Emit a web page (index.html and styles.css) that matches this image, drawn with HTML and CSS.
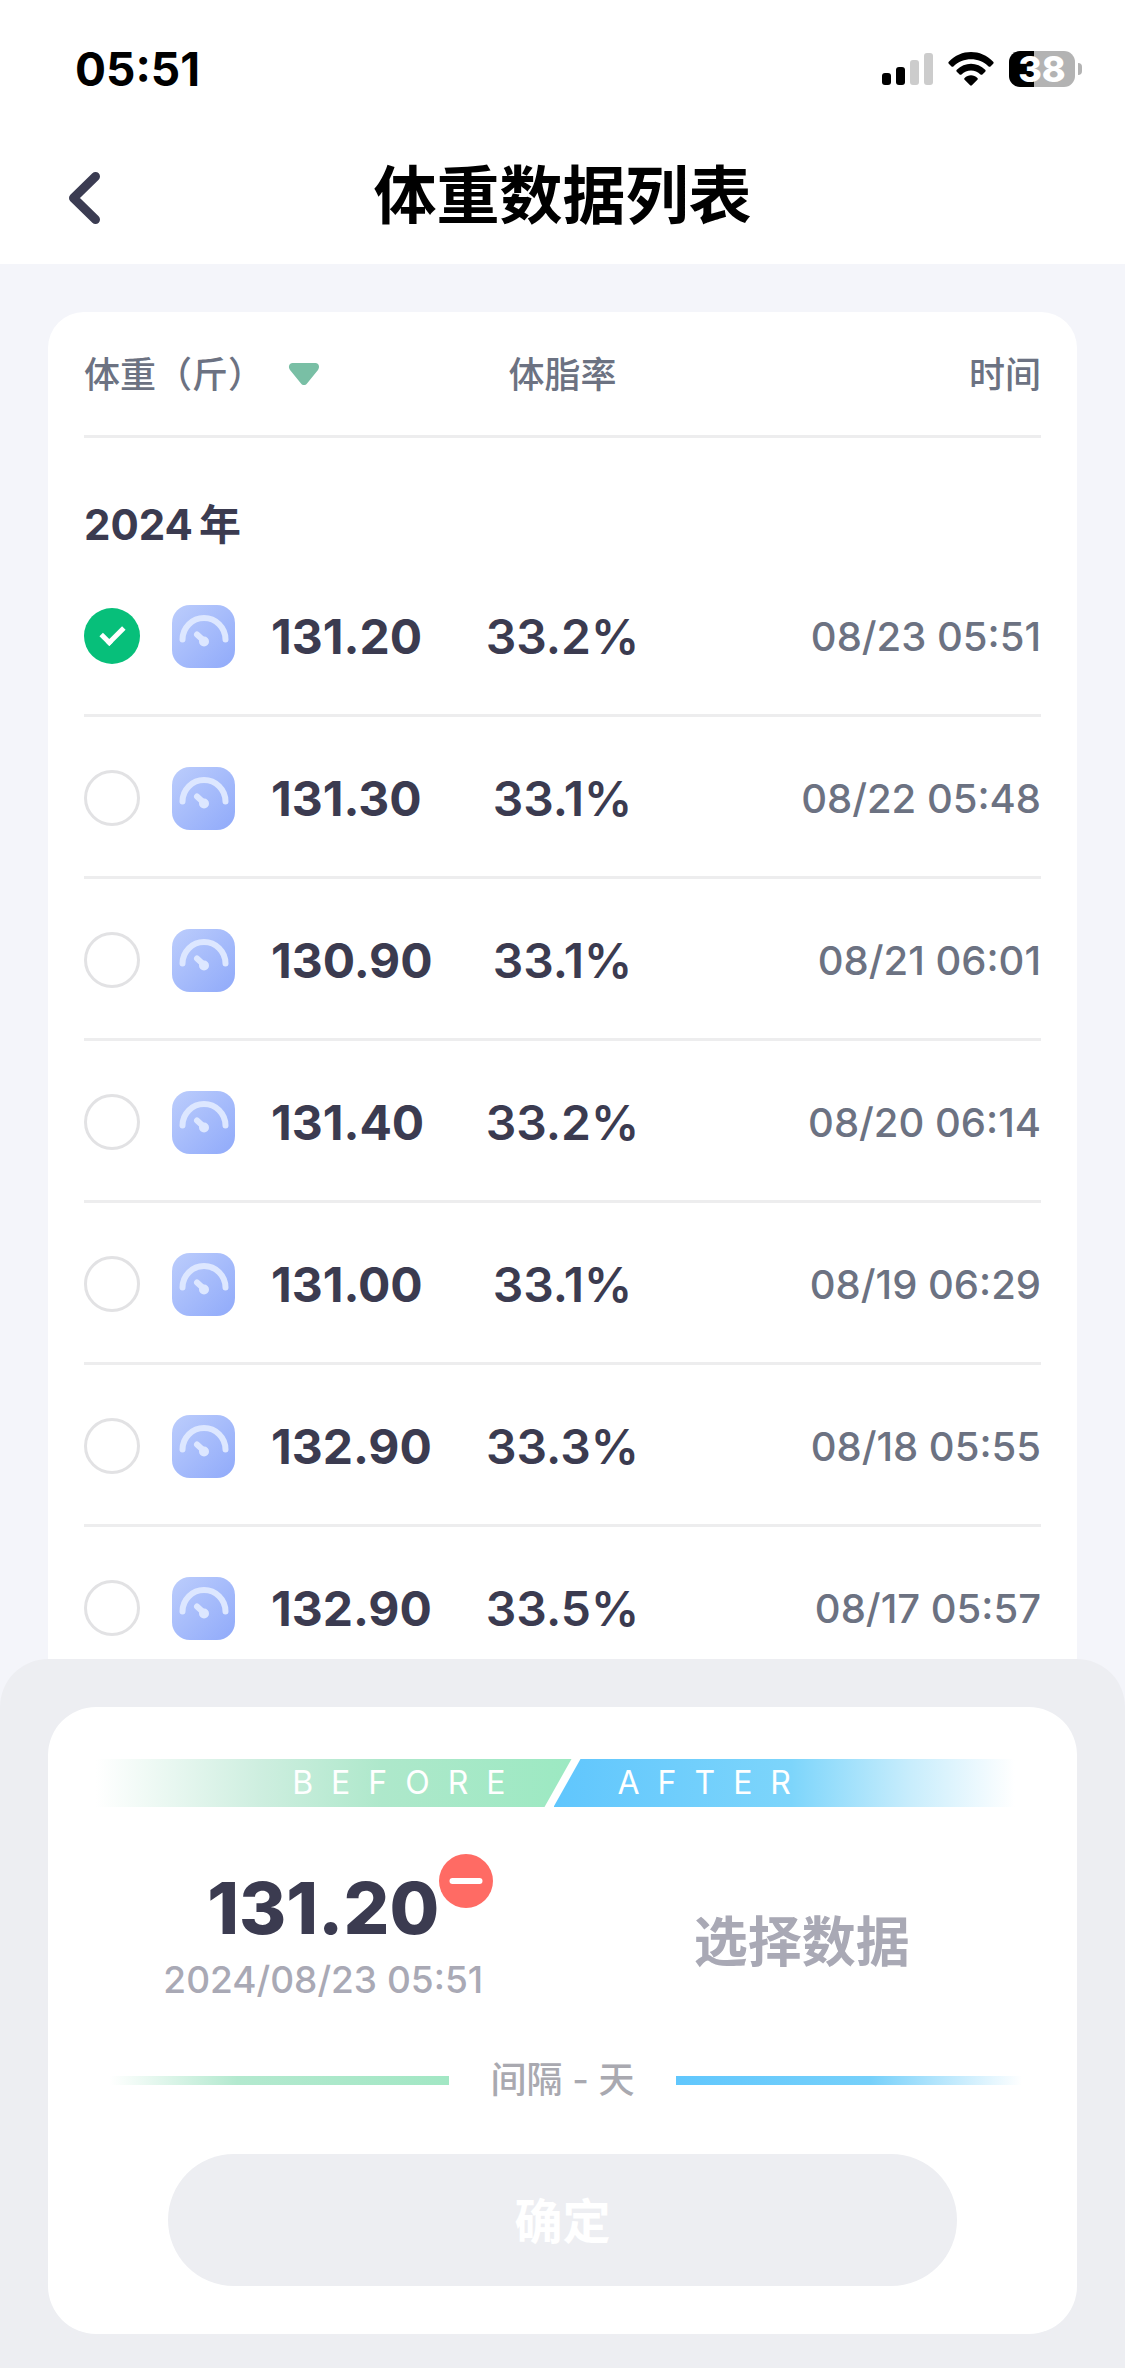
FILE: index.html
```html
<!DOCTYPE html>
<html lang="zh-CN">
<head>
<meta charset="utf-8">
<meta name="viewport" content="width=device-width, initial-scale=1">
<title>体重数据列表</title>
<link rel="stylesheet" href="styles.css">
</head>
<body>
<svg class="defs" width="0" height="0" aria-hidden="true">
  <defs>
    <linearGradient id="gauge-fill" x1="0" y1="0" x2="1" y2="1">
      <stop offset="0" stop-color="#bccdfc"/>
      <stop offset="1" stop-color="#90aafa"/>
    </linearGradient>
    <symbol id="gauge" viewBox="0 0 63 63">
      <rect width="63" height="63" rx="18" fill="url(#gauge-fill)"/>
      <path d="M10.500 34.500A21.500 21.500 0 0 1 53.500 34.500" fill="none" stroke="#dde7ff" stroke-width="6" stroke-linecap="round"/>
      <path d="M25 29.500L31 35" stroke="#dde7ff" stroke-width="6" stroke-linecap="round"/>
      <circle cx="32" cy="36.500" r="5" fill="#dde7ff"/>
    </symbol>
  </defs>
</svg>
<div class="app">
  <header class="top">
    <div class="status">
      <span class="clock">05:51</span>
      <div class="indicators">
        <svg width="51" height="33" viewBox="0 0 51 33" aria-label="信号">
          <rect x="0" y="20" width="9" height="12" rx="3"/>
          <rect x="14" y="14" width="9" height="18" rx="3"/>
          <rect x="28" y="7" width="9" height="25" rx="3" fill="#ccc"/>
          <rect x="42" y="0" width="9" height="32" rx="3" fill="#ccc"/>
        </svg>
        <svg width="46" height="34" viewBox="0 0 46 34" aria-label="无线网络">
          <path d="M0.800 9.800C13-3.200 33-3.200 45.200 9.800c.6.600.6 1.300 0 1.900l-2.700 2.700c-.6.600-1.300.6-1.900 0C31 4.800 15 4.800 5.400 14.400c-.6.600-1.300.6-1.900 0L.8 11.700c-.6-.6-.6-1.300 0-1.900z"/>
          <path d="M8.800 17.800c7.800-8.200 20.600-8.200 28.400 0 .6.600.6 1.300 0 1.900l-2.800 2.700c-.5.600-1.300.6-1.900 0-5.200-5.200-13.800-5.200-19 0-.6.600-1.400.6-1.900 0l-2.800-2.700c-.6-.6-.6-1.300 0-1.900z"/>
          <path d="M16.600 26c3.500-3.600 9.300-3.600 12.800 0 .6.600.6 1.200 0 1.800l-5.500 5.500c-.6.600-1.200.6-1.800 0l-5.500-5.500c-.6-.6-.6-1.200 0-1.800z"/>
        </svg>
        <div class="battery"><span class="charge">38</span><span class="nub"></span></div>
      </div>
    </div>
    <div class="titlebar">
      <button class="back" type="button" aria-label="返回">
        <svg width="32" height="52" viewBox="0 0 32 52"><path d="M27.500 4.500L5.500 26L27.500 47.500" fill="none" stroke="#3b3c52" stroke-width="9" stroke-linecap="round" stroke-linejoin="round"/></svg>
      </button>
      <h1 class="title">体重数据列表</h1>
    </div>
  </header>

  <main class="list">
    <div class="card">
      <table class="records">
        <colgroup><col class="col-side"><col class="col-mid"><col class="col-side"></colgroup>
        <thead>
          <tr>
            <th scope="col"><button class="sort" type="button">体重（斤）<svg width="32" height="24" viewBox="0 0 32 24" aria-hidden="true"><path d="M4.500 1H27.500C31 1 32 5 30 8L19 21.500C17.500 23.500 14.500 23.500 13 21.500L2 8C0 5 1 1 4.500 1z" fill="#79bfa5"/></svg></button></th>
            <th scope="col" class="mid">体脂率</th>
            <th scope="col" class="end">时间</th>
          </tr>
        </thead>
        <tbody>
          <tr class="year"><th colspan="3" scope="rowgroup">2024<span class="unit">年</span></th></tr>
          <tr>
            <td><label class="pick"><input type="checkbox" checked><svg width="63" height="63" aria-hidden="true"><use href="#gauge"/></svg>131.20</label></td>
            <td class="fat">33.2%</td><td class="time">08/23 05:51</td>
          </tr>
          <tr>
            <td><label class="pick"><input type="checkbox"><svg width="63" height="63" aria-hidden="true"><use href="#gauge"/></svg>131.30</label></td>
            <td class="fat">33.1%</td><td class="time">08/22 05:48</td>
          </tr>
          <tr>
            <td><label class="pick"><input type="checkbox"><svg width="63" height="63" aria-hidden="true"><use href="#gauge"/></svg>130.90</label></td>
            <td class="fat">33.1%</td><td class="time">08/21 06:01</td>
          </tr>
          <tr>
            <td><label class="pick"><input type="checkbox"><svg width="63" height="63" aria-hidden="true"><use href="#gauge"/></svg>131.40</label></td>
            <td class="fat">33.2%</td><td class="time">08/20 06:14</td>
          </tr>
          <tr>
            <td><label class="pick"><input type="checkbox"><svg width="63" height="63" aria-hidden="true"><use href="#gauge"/></svg>131.00</label></td>
            <td class="fat">33.1%</td><td class="time">08/19 06:29</td>
          </tr>
          <tr>
            <td><label class="pick"><input type="checkbox"><svg width="63" height="63" aria-hidden="true"><use href="#gauge"/></svg>132.90</label></td>
            <td class="fat">33.3%</td><td class="time">08/18 05:55</td>
          </tr>
          <tr>
            <td><label class="pick"><input type="checkbox"><svg width="63" height="63" aria-hidden="true"><use href="#gauge"/></svg>132.90</label></td>
            <td class="fat">33.5%</td><td class="time">08/17 05:57</td>
          </tr>
        </tbody>
      </table>
    </div>
  </main>

  <section class="sheet">
    <div class="compare">
      <div class="band">
        <span class="before">BEFORE</span>
        <span class="after">AFTER</span>
      </div>
      <div class="sides">
        <div class="side">
          <div class="weight">131.20
            <button class="remove" type="button" aria-label="移除"><svg width="54" height="54" viewBox="0 0 54 54"><circle cx="27" cy="27" r="27" fill="#ff6b64"/><path d="M13.500 27H40.500" stroke="#fff" stroke-width="6" stroke-linecap="round"/></svg></button>
          </div>
          <div class="when">2024/08/23 05:51</div>
        </div>
        <div class="side empty">选择数据</div>
      </div>
      <div class="interval">
        <span class="rule green"></span>
        <span class="gap">间隔 - 天</span>
        <span class="rule blue"></span>
      </div>
      <button class="confirm" type="button">确定</button>
    </div>
  </section>
</div>
</body>
</html>
```
FILE: styles.css
```css
* {
  box-sizing: border-box;
}

body {
  margin: 0;
  background: #f4f5fa;
  color: #3b3b50;
  font-family: Inter, "Noto Sans CJK SC", sans-serif;
}

button {
  padding: 0;
  border: 0;
  background: none;
  color: inherit;
  font: inherit;
}

svg {
  display: block;
  flex: none;
}

.defs {
  position: absolute;
}

.app {
  display: flex;
  flex-direction: column;
  height: 100vh;
}

/* Status bar and title */
.top {
  flex: none;
  height: 264px;
  background: #fff;
  color: #000;
}

.status {
  display: flex;
  align-items: center;
  justify-content: space-between;
  height: 138px;
  padding: 0 43px 0 75px;
}

.clock {
  font-size: 46px;
  font-weight: 700;
  line-height: 48px;
}

.indicators {
  display: flex;
  align-items: center;
  gap: 15px;
}

.battery {
  display: flex;
  align-items: center;
  gap: 3px;
}

.charge {
  width: 66px;
  height: 36px;
  border-radius: 11px;
  background: linear-gradient(90deg, #000 38%, #b3b3b3 38%);
  color: #fff;
  font-size: 36px;
  font-weight: 800;
  line-height: 36px;
  text-align: center;
}

.nub {
  width: 4px;
  height: 12px;
  border-radius: 0 4px 4px 0;
  background: #b3b3b3;
}

.titlebar {
  display: grid;
  grid-template-columns: 100px 1fr 100px;
  align-items: center;
  height: 114px;
}

.back {
  display: flex;
  justify-content: flex-end;
  padding-top: 6px;
}

.title {
  margin: 0;
  font-size: 63px;
  font-weight: 700;
  line-height: 72px;
  text-align: center;
}

/* Record list */
.list {
  flex: 1;
  min-height: 0;
  padding: 48px 48px 0;
  overflow: hidden;
}

.card {
  padding: 0 36px;
  border-radius: 36px 36px 0 0;
  background: #fff;
}

.records {
  width: 100%;
  border-spacing: 0;
  table-layout: fixed;
}

.col-side {
  width: 38%;
}

.col-mid {
  width: 24%;
}

.records th,
.records td {
  padding: 0;
  border-bottom: 3px solid #ededee;
  text-align: left;
  white-space: nowrap;
}

.records thead th {
  height: 126px;
  padding-bottom: 4px;
  color: #6c7282;
  font-size: 36px;
  font-weight: 500;
}

.records td {
  height: 162px;
  padding-top: 3px;
}

.records .year th {
  height: 117px;
  border: 0;
  font-size: 42px;
  font-weight: 700;
  line-height: 60px;
  vertical-align: bottom;
}

.unit {
  margin-left: 6px;
}

.records .mid,
.records .fat {
  text-align: center;
}

.records .end,
.records .time {
  text-align: right;
}

.sort {
  display: flex;
  align-items: center;
  gap: 24px;
}

.sort svg {
  margin-top: 4px;
}

.pick {
  display: flex;
  align-items: center;
  font-size: 48px;
  font-weight: 700;
}

.pick svg {
  margin: 0 36px 0 32px;
}

.pick input {
  flex: none;
  width: 56px;
  height: 56px;
  margin: 0;
  border: 3px solid #e2e2e4;
  border-radius: 50%;
  appearance: none;
}

.pick input:checked {
  display: grid;
  place-items: center;
  border: 0;
  background: #07bf7a;
}

.pick input:checked::before {
  content: "";
  width: 18px;
  height: 9px;
  margin-bottom: 6px;
  border: solid #fff;
  border-width: 0 0 5px 5px;
  transform: rotate(-45deg);
}

.fat {
  font-size: 48px;
  font-weight: 600;
}

.time {
  color: #6c7282;
  font-size: 40px;
  font-weight: 500;
}

/* Comparison sheet */
.sheet {
  flex: none;
  padding: 48px 48px 34px;
  border-radius: 48px 48px 0 0;
  background: #edeef2;
}

.compare {
  padding: 52px 48px 48px;
  border-radius: 48px;
  background: #fff;
}

.band {
  display: grid;
  grid-template-columns: 1fr 1fr;
  color: #fff;
  font-size: 32px;
  letter-spacing: 18px;
  line-height: 48px;
}

.before {
  margin-right: -9px;
  padding-right: 48px;
  background: linear-gradient(90deg, #fff, #cdeedf 35%, #aee8cb 60%, #9ce9c2);
  clip-path: polygon(0 0, 100% 0, calc(100% - 27px) 100%, 0 100%);
  text-align: right;
}

.after {
  margin-left: -9px;
  padding-left: 64px;
  background: linear-gradient(90deg, #60c6fd, #7dd5fb 50%, #c8edfc 75%, #fff 97%);
  clip-path: polygon(27px 0, 100% 0, 100% 100%, 0 100%);
}

.sides {
  display: grid;
  grid-template-columns: 1fr 1fr;
  align-items: center;
  height: 246px;
  margin: 0 -12px;
  padding-top: 16px;
  text-align: center;
}

.weight {
  position: relative;
  width: max-content;
  margin: 0 auto;
  font-size: 72px;
  font-weight: 800;
  line-height: 84px;
}

.remove {
  position: absolute;
  top: -12px;
  left: 100%;
}

.when {
  color: #a9a9b5;
  font-size: 37px;
  font-weight: 500;
  line-height: 60px;
}

.empty {
  color: #a9a9b5;
  font-size: 54px;
  font-weight: 700;
}

.interval {
  display: flex;
  align-items: center;
  gap: 42px;
  color: #a9a9b0;
  font-size: 36px;
  font-weight: 500;
  line-height: 54px;
}

.rule {
  flex: 1;
  height: 9px;
}

.green {
  background: linear-gradient(90deg, #fff 4%, #b3e9cf 40%, #a2e7c4);
}

.blue {
  background: linear-gradient(90deg, #61c7fd, #76d0fa 55%, #fff 98%);
}

.confirm {
  display: block;
  width: calc(100% - 144px);
  height: 132px;
  margin: 47px auto 0;
  padding-bottom: 4px;
  border-radius: 66px;
  background: #edeef2;
  color: #fff;
  font-size: 48px;
  font-weight: 700;
}
```
